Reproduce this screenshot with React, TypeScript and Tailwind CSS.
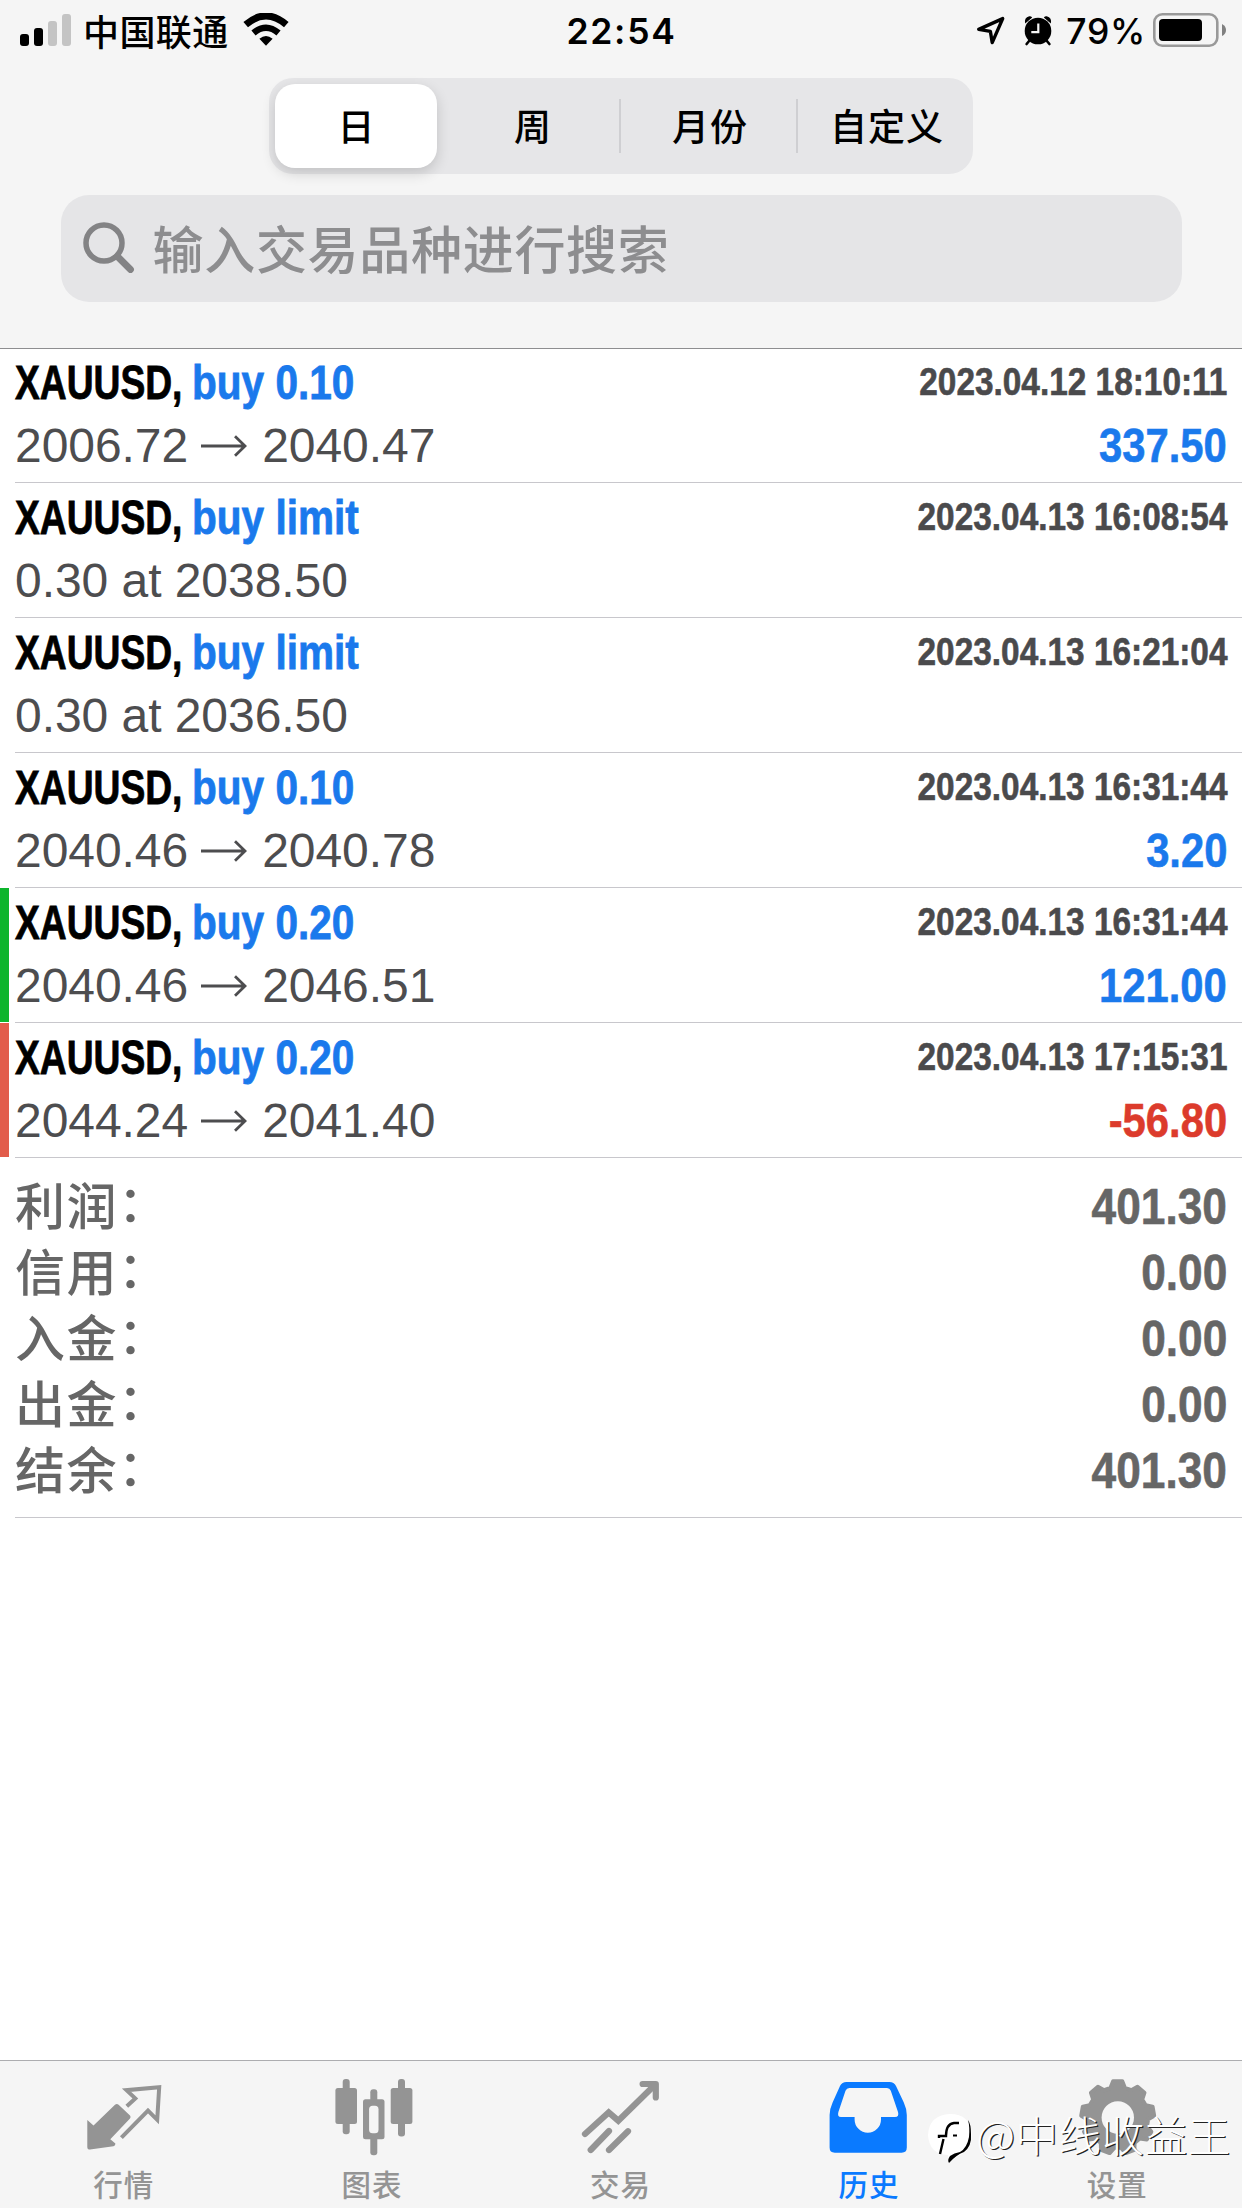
import React from 'react';

type TabName = 'quotes' | 'charts' | 'trade' | 'history' | 'settings';

interface Deal {
    action: string;
    time: string;
    from: string;
    to?: string;
    profit?: string;
    marker?: 'tp' | 'sl';
}

const deals: Deal[] = [
    { action: 'buy 0.10', time: '2023.04.12 18:10:11', from: '2006.72', to: '2040.47', profit: '337.50' },
    { action: 'buy limit', time: '2023.04.13 16:08:54', from: '0.30 at 2038.50' },
    { action: 'buy limit', time: '2023.04.13 16:21:04', from: '0.30 at 2036.50' },
    { action: 'buy 0.10', time: '2023.04.13 16:31:44', from: '2040.46', to: '2040.78', profit: '3.20' },
    { action: 'buy 0.20', time: '2023.04.13 16:31:44', from: '2040.46', to: '2046.51', profit: '121.00', marker: 'tp' },
    { action: 'buy 0.20', time: '2023.04.13 17:15:31', from: '2044.24', to: '2041.40', profit: '-56.80', marker: 'sl' },
];

const summary = [
    { label: '利润', value: '401.30' },
    { label: '信用', value: '0.00' },
    { label: '入金', value: '0.00' },
    { label: '出金', value: '0.00' },
    { label: '结余', value: '401.30' },
];

const periods = ['日', '周', '月份', '自定义'];

const tabs: { name: TabName; label: string }[] = [
    { name: 'quotes', label: '行情' },
    { name: 'charts', label: '图表' },
    { name: 'trade', label: '交易' },
    { name: 'history', label: '历史' },
    { name: 'settings', label: '设置' },
];

// Nine-tooth gear outline
const gearPath = () => {
    const teeth = 9;
    const step = (Math.PI * 2) / teeth;
    const points: string[] = [];
    for (let i = 0; i < teeth; i++) {
        const a = i * step - Math.PI / 2;
        [[-0.34, 30.5], [-0.18, 36.5], [0.18, 36.5], [0.34, 30.5]].forEach(([k, r]) => {
            const t = a + k * step;
            points.push(`${(39.7 + r * Math.cos(t)).toFixed(2)} ${(39.5 + r * Math.sin(t)).toFixed(2)}`);
        });
    }
    return `M${points.join('L')}Z`;
};

const TabIcon: React.FC<{ name: TabName }> = ({ name }) => (
    <svg width="80" height="80" viewBox="0 0 80 80" fill="currentColor" className="block">
        {name === 'quotes' && (
            <>
                <path d="M3.3 42L9.5 47.6L31 26.8Q32.8 25.2 34.6 26.8L46 37.5Q47.2 38.9 46 40.4L26.3 61.2L31.4 65.5Q31.6 67.8 29.5 68.2L6 71.6Q3.3 71.6 3.3 69Z" />
                <path d="M42.8 28.2L51.3 20.4L42.5 12.2L75.2 9.2L73.2 41.8L64 32.6L37.4 59.6" fill="none" stroke="currentColor" strokeWidth="4" />
            </>
        )}
        {name === 'charts' && (
            <>
                <rect x="9.7" y="1" width="7" height="55.3" rx="3" />
                <rect x="2.4" y="10" width="21.6" height="36" rx="2.5" />
                <rect x="37.3" y="11.3" width="7" height="66" rx="3" />
                <rect x="30" y="21.3" width="21.5" height="40" rx="2.5" />
                <rect x="36.1" y="27.7" width="9.4" height="27.6" rx="3.5" className="text-[#f5f5f5]" />
                <rect x="65" y="1" width="7" height="57.5" rx="3" />
                <rect x="57.7" y="10" width="21.7" height="36" rx="2.5" />
            </>
        )}
        {name === 'trade' && (
            <g fill="none" stroke="currentColor" strokeWidth="6.2" strokeLinecap="round" strokeLinejoin="round">
                <path d="M4 56L27.7 34.4L37.3 42.7L73.5 7.3" strokeLinejoin="miter" />
                <path d="M61.6 6H74.8V19.4" />
                <path d="M9.7 72L28 53M28 72L47 53.2" />
            </g>
        )}
        {name === 'history' && (
            <path
                fillRule="evenodd"
                d="M17.5 4H60.5Q65 4 67 8L74.8 24.5Q77.8 31 77.8 37V69.5Q77.8 74.7 72.6 74.7H5.8Q.6 74.7 .6 69.5V37Q.6 31 3.6 24.5L11 8Q13 4 17.5 4ZM20.4 10Q17.6 10 16.5 12.8L9.4 34Q8 39 12 39H25.6V41.5A13.2 13.2 0 0 0 52 41.5V39H66Q70.4 39 69 34L61.8 12.8Q60.7 10 58 10Z"
            />
        )}
        {name === 'settings' && (
            <>
                <path d={gearPath()} stroke="currentColor" strokeWidth="4" strokeLinejoin="round" />
                <circle cx="39.8" cy="39.5" r="16.2" className="text-[#f5f5f5]" />
            </>
        )}
    </svg>
);

const StatusBar: React.FC = () => (
    <div className="flex h-[60px] items-center justify-between pl-[20px] pr-[15px] text-black">
        <div className="flex w-[420px] items-center">
            <svg width="51" height="34" viewBox="0 0 51 34">
                <rect x="0" y="21" width="9" height="12" rx="3" />
                <rect x="14" y="15" width="9" height="18" rx="3" />
                <rect x="28" y="8" width="9" height="25" rx="3" fill="#c4c4c4" />
                <rect x="42" y="1" width="9" height="32" rx="3" fill="#c4c4c4" />
            </svg>
            <span className="ml-[12px] font-['Noto_Sans_CJK_SC',sans-serif] text-[36px] leading-[58px] tracking-[0.4px] font-medium">中国联通</span>
            <svg width="46" height="34" viewBox="0 0 46 34" className="ml-[14px]" fill="none" stroke="#000">
                <path d="M2.7 11.7Q23-5.8 43.3 11.7" strokeWidth="7" />
                <path d="M10.5 20Q23 9.5 35.5 20" strokeWidth="6.5" />
                <path d="M16.4 25.8Q23 20.4 29.6 25.8L23 32.8Z" fill="#000" stroke="none" />
            </svg>
        </div>
        <span className="-ml-[4px] w-[160px] pt-[3px] text-center font-[Inter,sans-serif] text-[35.5px] tracking-[1.7px] leading-[56px] font-semibold">22:54</span>
        <div className="flex w-[420px] items-center justify-end">
            <svg width="30" height="30" viewBox="0 0 30 30" fill="none" stroke="#000" strokeWidth="3.4" strokeLinejoin="round">
                <path d="M2.7 14.4L26.7 3.6L16.2 27.6L14.4 16.4Z" />
            </svg>
            <svg width="30" height="32" viewBox="0 0 30 32" className="ml-[17px]">
                <circle cx="15" cy="17" r="13.3" />
                <path d="M2.2 9.5Q.8 3.8 6.3 2.2Q8 2 9.2 3.4ZM27.8 9.5Q29.2 3.8 23.7 2.2Q22 2 20.8 3.4Z" />
                <path d="M6.5 26.5L3.6 30M23.5 26.5L26.4 30" stroke="#000" strokeWidth="2.6" strokeLinecap="round" />
                <path d="M15.3 9.5V18.2H8.3" stroke="#f5f5f5" strokeWidth="2.2" fill="none" />
            </svg>
            <span className="ml-[13px] pt-[3px] font-[Inter,sans-serif] text-[35.5px] leading-[57px] tracking-[0.7px] font-medium">79%</span>
            <svg width="74" height="34" viewBox="0 0 74 34" className="ml-[7px]">
                <rect x="1.3" y="1.3" width="63" height="31.4" rx="8" fill="none" stroke="#999" strokeWidth="2.6" />
                <rect x="6" y="6" width="43" height="22" rx="4" />
                <path d="M69 11Q73 13 73 17T69 23Z" fill="#808080" />
            </svg>
        </div>
    </div>
);

const Header: React.FC = () => (
    <header className="relative z-10 h-[349px] border-b border-[#8e8e90] bg-[#f5f5f5]">
        <StatusBar />
        <div className="mx-auto mt-[18px] flex h-[96px] w-[704px] items-center rounded-[24px] bg-[#e6e6e8]">
            {periods.map((period, i) => (
                <div key={period} className={`flex h-full items-center ${i === 0 || i === 3 ? 'w-[175px]' : 'w-[177px]'}`}>
                    <div
                        className={`flex flex-1 items-center justify-center font-['Noto_Sans_CJK_SC',sans-serif] text-[37px] leading-none tracking-[1px] font-medium text-black ${
                            i === 0 ? 'ml-[6px] mr-[7px] h-[84px] rounded-[20px] bg-white shadow-[0_5px_14px_rgba(0,0,0,0.16)]' : ''
                        }`}
                    >
                        <span className={i === 0 ? 'pb-[1px] pl-[1px]' : 'pb-[1px] pl-[3px]'}>{period}</span>
                    </div>
                    {(i === 1 || i === 2) && <div className="h-[54px] w-[2px] bg-[#cfcfd2]" />}
                </div>
            ))}
        </div>
        <div className="mx-auto mt-[21px] flex h-[107px] w-[1121px] items-center rounded-[28px] bg-[#e5e5e7] pl-[22px]">
            <svg width="52" height="52" viewBox="0 0 52 52" fill="none" stroke="#838385" strokeLinecap="round" className="mb-[2px]">
                <circle cx="21" cy="21" r="18" strokeWidth="5.5" />
                <path d="M34.5 34.5L47.5 47.5" strokeWidth="6.8" />
            </svg>
            <span className="ml-[18px] pb-[2px] font-['Noto_Sans_CJK_SC',sans-serif] text-[51px] leading-none tracking-[0.7px] font-medium text-[#8d8d8f]">
                输入交易品种进行搜索
            </span>
        </div>
    </header>
);

const DealRow: React.FC<{ deal: Deal }> = ({ deal }) => (
    <div className="flex h-[135px]">
        <div className="w-[15px]">
            {deal.marker && <div className={`h-[134px] w-[9px] ${deal.marker === 'tp' ? 'bg-[#0db52c]' : 'bg-[#e25c4b]'}`} />}
        </div>
        <div className="flex flex-1 justify-between border-b border-[#c8c7cc] pt-[2px] pr-[15px]">
            <div>
                <div className="flex h-[64px] pt-[1px] text-[48px] leading-[64px] font-bold whitespace-pre [-webkit-text-stroke:0.8px_currentColor]">
                    <span className="block w-[177px] origin-left scale-x-[0.775] text-black">XAUUSD,</span>
                    <span className="block origin-left scale-x-[0.845] text-[#1a79ec]">{deal.action}</span>
                </div>
                <div className="flex h-[64px] items-center text-[48px] leading-[64px] tracking-[-0.05px] text-[#4d4d4f]">
                    <span>{deal.from}</span>
                    {deal.to && (
                        <>
                            <svg width="46" height="24" viewBox="0 0 46 24" className="ml-[13px] mr-[15px]" fill="none" stroke="currentColor" strokeWidth="2.8">
                                <path d="M0 12H44M34 2.2L44 12L34 21.8" />
                            </svg>
                            <span>{deal.to}</span>
                        </>
                    )}
                </div>
            </div>
            <div className="flex flex-col items-end font-bold [-webkit-text-stroke:0.6px_currentColor]">
                <span className="block h-[64px] origin-right scale-x-[0.867] text-[38.5px] leading-[64px] text-[#4a4a4c]">{deal.time}</span>
                {deal.profit && (
                    <span
                        className={`block h-[64px] origin-right scale-x-[0.87] text-[48px] leading-[64px] ${
                            deal.profit.startsWith('-') ? 'text-[#dc3b2c]' : 'text-[#1a79ec]'
                        }`}
                    >
                        {deal.profit}
                    </span>
                )}
            </div>
        </div>
    </div>
);

const Summary: React.FC = () => (
    <div className="ml-[15px] h-[360px] border-b border-[#c8c7cc] pt-[16px] pr-[15px]">
        {summary.map(item => (
            <div key={item.label} className="flex h-[66px] justify-between text-[#666]">
                <span className="font-['Noto_Sans_CJK_SC',sans-serif] text-[50px] leading-[58px] tracking-[1.5px] font-medium">
                    {item.label}
                    <span className="inline-block -translate-y-[3px]">：</span>
                </span>
                <span className="block origin-right scale-x-[0.885] text-[50px] leading-[66px] font-bold [-webkit-text-stroke:0.6px_currentColor]">{item.value}</span>
            </div>
        ))}
    </div>
);

const TabBar: React.FC = () => (
    <nav className="relative flex h-[148px] border-t border-[#adadb0] bg-[#f5f5f5]">
        {tabs.map(tab => (
            <div key={tab.name} className={`flex flex-1 flex-col items-center pt-[17px] ${tab.name === 'history' ? 'text-[#0a7aff]' : 'text-[#949494]'}`}>
                <TabIcon name={tab.name} />
                <span className="mt-[10px] mr-[1px] font-['Noto_Sans_CJK_SC',sans-serif] text-[29.5px] leading-[30px] tracking-[1px] font-medium">{tab.label}</span>
            </div>
        ))}
        {/* Author watermark */}
        <div className="absolute top-[48px] right-[11px] flex h-[50px] items-center">
            <svg width="46" height="56" viewBox="0 0 46 56" className="mt-[12px] mr-[2px]">
                <path d="M20 50Q28 46 34 42Q44 37 44 22Q42 2 22 2Q1 3 0 23Q1 42 20 43Z" fill="#fff" />
                <path d="M40 8Q43 12 43 22Q44 34 36 40Q28 43 21 51Q19 48 22 44Q26 41 32 40Q39 36 41 25Q42 15 40 8Z" />
                <path d="M12 42L15.5 27M11 26V24H18Q18 12 26 11H31" fill="none" stroke="#000" strokeWidth="2.4" />
                <path d="M25 23.5H29" fill="none" stroke="#000" strokeWidth="2" />
            </svg>
            <span className="font-['Noto_Sans_CJK_SC',sans-serif] text-[42.5px] leading-[50px] font-light tracking-[0.6px] text-white [text-shadow:1.2px_1.2px_0_#222]">@中线收益王</span>
        </div>
    </nav>
);

const App: React.FC = () => (
    <div className="flex h-[2208px] w-[1242px] flex-col overflow-hidden bg-white font-['Liberation_Sans',sans-serif]">
        <Header />
        <main className="-mt-px flex-1">
            {deals.map(deal => (
                <DealRow key={deal.time + deal.action} deal={deal} />
            ))}
            <Summary />
        </main>
        <TabBar />
    </div>
);

export default App;
